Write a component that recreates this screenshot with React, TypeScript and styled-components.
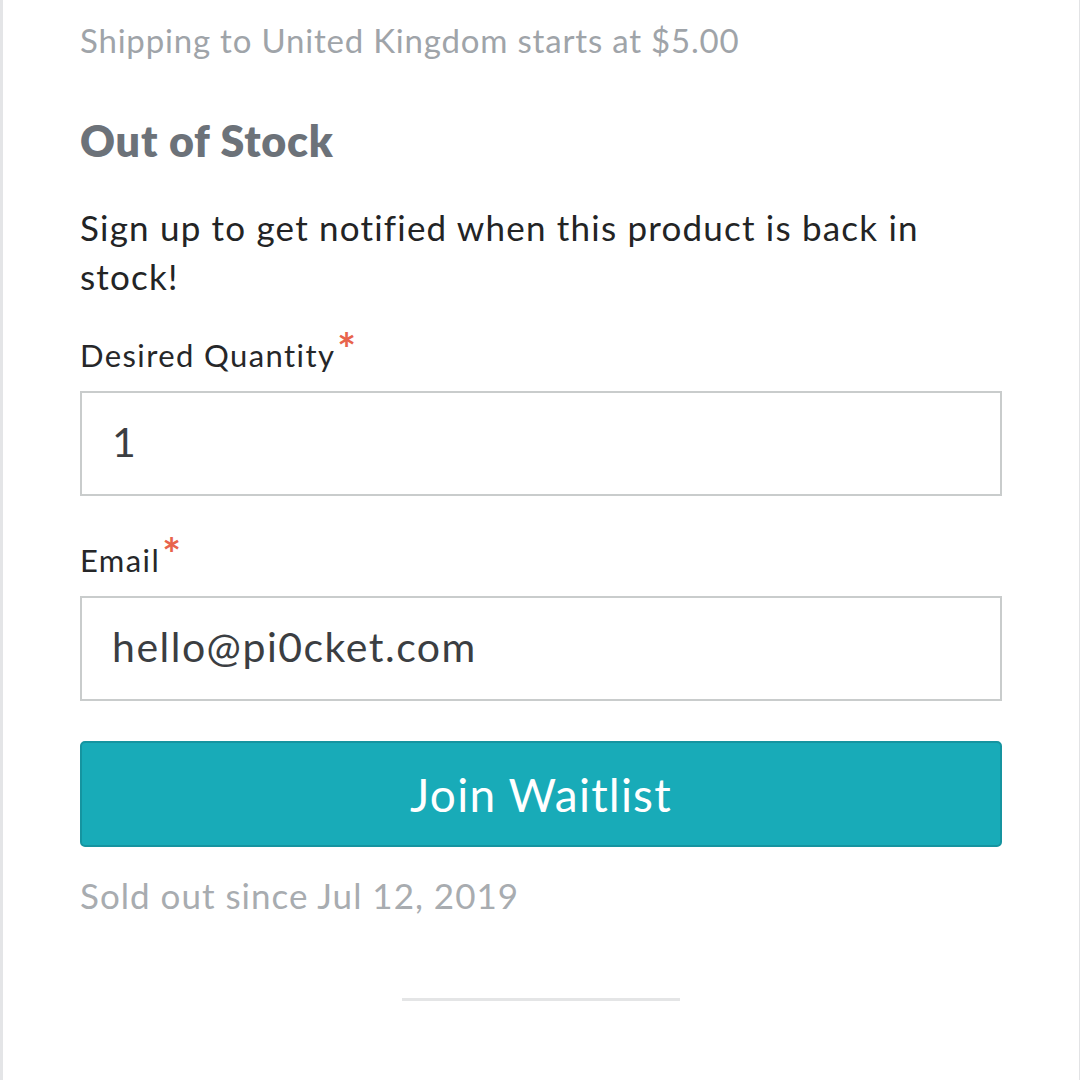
import React from 'react'
import styled, { createGlobalStyle } from 'styled-components'

const GlobalStyle = createGlobalStyle`
  html, body {
    margin: 0;
    padding: 0;
    background: #ffffff;
  }
  body {
    font-family: Lato, "Open Sans", "Liberation Sans", sans-serif;
    -webkit-font-smoothing: antialiased;
  }
`

const Page = styled.div`
  width: 1080px;
  height: 1080px;
  box-sizing: border-box;
  border-left: 3px solid #e4e5e7;
  border-right: 1px solid #e2e3e5;
  overflow: hidden;
  background: #fff;
`

const Content = styled.div`
  width: 922px;
  margin-left: 77px;
  display: flex;
  flex-direction: column;
`

const ShippingNote = styled.p`
  margin: 20px 0 0;
  font-size: 33px;
  line-height: 40px;
  letter-spacing: 0.8px;
  color: #9fa4a9;
`

const Heading = styled.h2`
  margin: 56px 0 0;
  font-size: 43px;
  line-height: 50px;
  font-weight: 800;
  letter-spacing: 0.8px;
  color: #6c7279;
`

const Intro = styled.p`
  margin: 37px 0 0;
  font-size: 35px;
  line-height: 49px;
  letter-spacing: 1.2px;
  color: #232425;
`

const Field = styled.div<{ $top: number }>`
  display: flex;
  flex-direction: column;
  margin-top: ${(p) => p.$top}px;
`

const Label = styled.label`
  font-size: 31px;
  line-height: 36px;
  letter-spacing: 1.4px;
  color: #262729;
`

// required marker, slightly raised over the label text
const Star = styled.span`
  color: #e8634c;
  font-size: 44px;
  font-weight: 700;
  line-height: 0;
  position: relative;
  top: -2px;
  margin-left: 2px;
`

const Input = styled.input`
  margin-top: 18px;
  box-sizing: border-box;
  width: 922px;
  height: 105px;
  border: 2px solid #c9cccc;
  border-radius: 0;
  padding: 0 0 4px 30px;
  font-family: inherit;
  font-size: 41px;
  letter-spacing: 1.5px;
  color: #3b3e42;
  background: #fff;
  outline: none;
`

const Button = styled.button`
  margin-top: 40px;
  height: 106px;
  width: 922px;
  background: #18abb8;
  border: 2px solid #1594a0;
  border-radius: 5px;
  color: #fff;
  font-family: inherit;
  font-size: 46px;
  letter-spacing: 1.2px;
  cursor: pointer;
`

const SoldOut = styled.p`
  margin: 28px 0 0;
  font-size: 35px;
  line-height: 40px;
  letter-spacing: 1px;
  color: #a8acb0;
`

const Divider = styled.hr`
  margin: 83px auto 0;
  width: 278px;
  height: 3px;
  border: none;
  background: #e4e5e6;
`

export default function App() {
  return (
    <>
      <GlobalStyle />
      <Page>
        <Content>
          <ShippingNote>Shipping to United Kingdom starts at $5.00</ShippingNote>
          <Heading>Out of Stock</Heading>
          <Intro>Sign up to get notified when this product is back in stock!</Intro>
          <Field $top={36}>
            <Label>
              Desired Quantity<Star>*</Star>
            </Label>
            <Input type="text" defaultValue="1" />
          </Field>
          <Field $top={46}>
            <Label>
              Email<Star>*</Star>
            </Label>
            <Input type="text" defaultValue="hello@pi0cket.com" />
          </Field>
          <Button>Join Waitlist</Button>
          <SoldOut>Sold out since Jul 12, 2019</SoldOut>
          <Divider />
        </Content>
      </Page>
    </>
  )
}
